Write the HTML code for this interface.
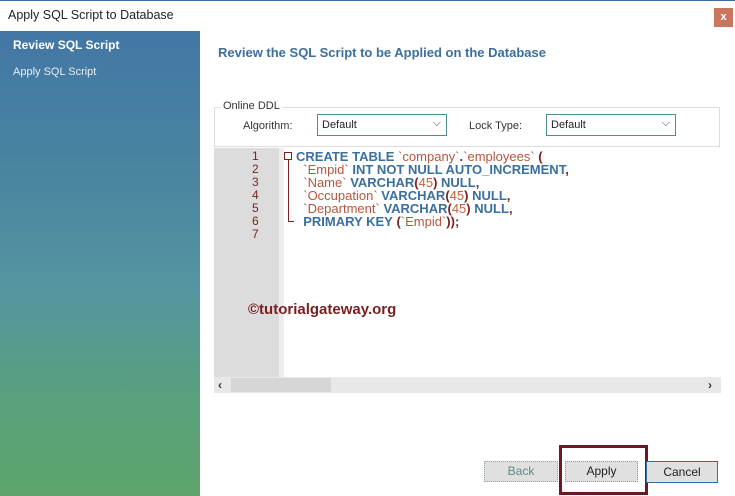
<!DOCTYPE html>
<html><head><style>
*{margin:0;padding:0;box-sizing:border-box}
body{width:735px;height:496px;background:#fff;font-family:"Liberation Sans",sans-serif;position:relative;overflow:hidden;font-size:12px}
.a{position:absolute}
.code{font-size:13px;line-height:13px;white-space:pre;}
.k{color:#3b6fa0;font-weight:bold}
.s{color:#b5563e}
.p{color:#7a1f1f;font-weight:bold}
.n{color:#c8603a}
</style></head><body>
<div class="a" style="left:0;top:0;width:735px;height:1px;background:#3a6ea5"></div>
<div class="a" style="left:8px;top:8px;font-size:12.5px;color:#222">Apply SQL Script to Database</div>
<div class="a" style="left:714px;top:8px;width:19px;height:19px;background:#c87660;color:#fff;font-size:11px;font-weight:bold;text-align:center;line-height:18px">x</div>
<div class="a" style="left:0;top:31px;width:200px;height:465px;background:linear-gradient(#4277a4 0%,#4a84a0 30%,#5595a0 55%,#5aa07c 80%,#5ea46c 100%)"></div>
<div class="a" style="left:13px;top:38px;color:#fff;font-weight:bold;font-size:12px">Review SQL Script</div>
<div class="a" style="left:13px;top:66px;color:#e6eef5;font-size:11px">Apply SQL Script</div>
<div class="a" style="left:218px;top:45px;color:#3b6fa0;font-weight:bold;font-size:13px">Review the SQL Script to be Applied on the Database</div>
<div class="a" style="left:214px;top:107px;width:506px;height:40px;border:1px solid #ddd"></div>
<div class="a" style="left:221px;top:100px;background:#fff;padding:0 2px;font-size:11px;color:#333">Online DDL</div>
<div class="a" style="left:243px;top:120px;font-size:11px;color:#333">Algorithm:</div>
<div class="a" style="left:317px;top:114px;width:130px;height:22px;border:1px solid #4f8f8a;font-size:11px;padding:4px 4px;color:#222">Default<span style="position:absolute;right:5px;top:2px;color:#444">&#x2335;</span></div>
<div class="a" style="left:469px;top:120px;font-size:11px;color:#333">Lock Type:</div>
<div class="a" style="left:546px;top:114px;width:130px;height:22px;border:1px solid #4f8f8a;font-size:11px;padding:4px 4px;color:#222">Default<span style="position:absolute;right:5px;top:2px;color:#444">&#x2335;</span></div>
<div class="a" style="left:214px;top:148px;width:65px;height:229px;background:#dcdcdc"></div>
<div class="a" style="left:279px;top:148px;width:5px;height:229px;background:#eee"></div>
<div class="a code" style="left:252px;top:150px;color:#7a1f1f;text-align:right;font-size:12px">1
2
3
4
5
6
7</div>
<div class="a" style="left:284px;top:152px;width:8px;height:8px;border:1px solid #7a1f1f"></div>
<div class="a" style="left:288px;top:160px;width:1px;height:62px;background:#7a1f1f"></div>
<div class="a" style="left:288px;top:221px;width:6px;height:1px;background:#7a1f1f"></div>
<div class="a code" style="left:296px;top:150px"><span class="k">CREATE TABLE</span> <span class="s">`company`</span><span class="p">.</span><span class="s">`employees`</span> <span class="p">(</span>
  <span class="s">`Empid`</span> <span class="k">INT NOT NULL AUTO_INCREMENT</span><span class="p">,</span>
  <span class="s">`Name`</span> <span class="k">VARCHAR</span><span class="p">(</span><span class="n">45</span><span class="p">)</span> <span class="k">NULL</span><span class="p">,</span>
  <span class="s">`Occupation`</span> <span class="k">VARCHAR</span><span class="p">(</span><span class="n">45</span><span class="p">)</span> <span class="k">NULL</span><span class="p">,</span>
  <span class="s">`Department`</span> <span class="k">VARCHAR</span><span class="p">(</span><span class="n">45</span><span class="p">)</span> <span class="k">NULL</span><span class="p">,</span>
  <span class="k">PRIMARY KEY</span> <span class="p">(</span><span class="s">`Empid`</span><span class="p">));</span></div>
<div class="a" style="left:248px;top:301px;color:#7a1f1f;font-weight:bold;font-size:15px">©tutorialgateway.org</div>
<div class="a" style="left:214px;top:377px;width:507px;height:16px;background:#e8e8e8"></div>
<div class="a" style="left:231px;top:378px;width:100px;height:14px;background:#d6d6d6"></div>
<div class="a" style="left:218px;top:378px;color:#333;font-size:12px;font-weight:bold">&lsaquo;</div>
<div class="a" style="left:708px;top:378px;color:#333;font-size:12px;font-weight:bold">&rsaquo;</div>
<div class="a" style="left:484px;top:461px;width:74px;height:21px;background:#e0e0e0;border:1px dotted #8aa;color:#5a8a8a;text-align:center;line-height:19px">Back</div>
<div class="a" style="left:559px;top:445px;width:89px;height:50px;border:3px solid #6b1a23"></div>
<div class="a" style="left:565px;top:461px;width:73px;height:21px;background:#e0e0e0;border:1px dotted #6a9;color:#222;text-align:center;line-height:19px">Apply</div>
<div class="a" style="left:646px;top:461px;width:72px;height:22px;background:#e0e0e0;border:1px solid #3a6ea5;color:#222;text-align:center;line-height:20px">Cancel</div>
</body></html>
